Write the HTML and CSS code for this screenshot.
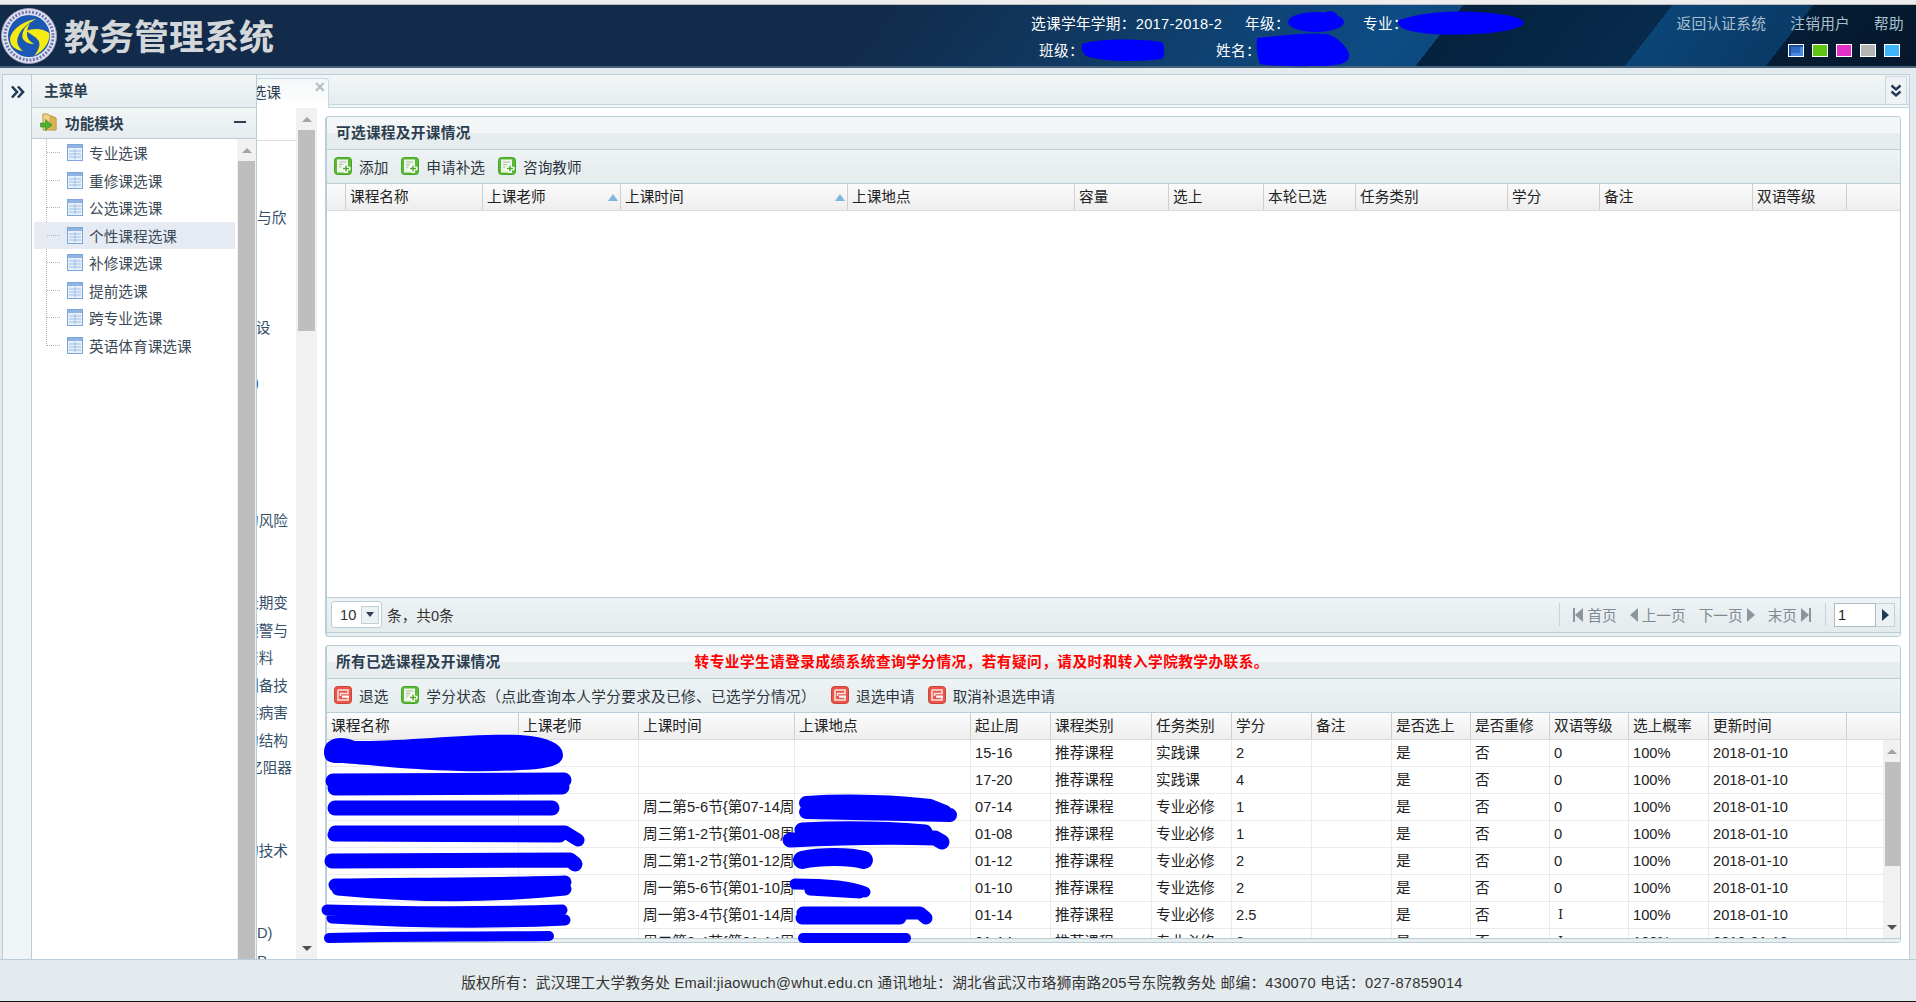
FILE: index.html
```html
<!DOCTYPE html>
<html lang="zh-CN">

<head>
    <meta charset="UTF-8">
    <title>教务管理系统</title>
    <link rel="stylesheet" href="styles.css">
</head>

<body>
    <svg class="defs" xmlns="http://www.w3.org/2000/svg">
        <symbol id="ico-add" viewBox="0 0 18 18">
            <rect x="0.5" y="0.5" width="17" height="17" rx="3" fill="#5cbb35" stroke="#46a326" />
            <rect x="3" y="2.5" width="11" height="13" fill="#eef5e8" />
            <path d="M5 5h7M5 7.5h4M5 10h3" stroke="#a9c0a5" stroke-width="1" />
            <path d="M12 7v9M7.5 11.5h9" stroke="#fff" stroke-width="3.4" />
            <path d="M12 8.5v6M9 11.5h6" stroke="#4aa82a" stroke-width="1.4" />
        </symbol>
        <symbol id="ico-del" viewBox="0 0 18 18">
            <rect x="0.5" y="0.5" width="17" height="17" rx="3" fill="#e8554a" stroke="#cf4236" />
            <path d="M4 4h10v3.5H6.5V10" fill="none" stroke="#fbe3df" stroke-width="1.6" />
            <path d="M4 4v10h10v-3H8" fill="none" stroke="#fbe3df" stroke-width="1.6" />
            <rect x="8" y="9.5" width="7" height="2" fill="#fff" />
        </symbol>
        <symbol id="ico-table" viewBox="0 0 16 17">
            <rect x="0.5" y="0.5" width="15" height="16" fill="#e6effa" stroke="#7aa6dc" />
            <rect x="1" y="1" width="14" height="3" fill="#8fb4e2" />
            <path d="M2 7h12M2 10h12M2 13h12M8 5v10" stroke="#9dbde5" stroke-width="1" />
        </symbol>
    </svg>

    <div class="top-strip"></div>

    <header class="header">
        <svg class="logo" viewBox="0 0 56 56" xmlns="http://www.w3.org/2000/svg">
            <circle cx="28" cy="28" r="27.5" fill="#e4e4ee" stroke="#9c9cc4" />
            <circle cx="28" cy="28" r="24" fill="none" stroke="#6f78b4" stroke-width="3" stroke-dasharray="2 1.5" />
            <circle cx="28" cy="28" r="21" fill="#1a58b4" />
            <path d="M35 11C22 13 10 22 9 31C9 38 14 42 22 43C17 39 15 34 17 29C19 22 27 15 35 11z" fill="#f6ea12" />
            <path d="M29 15C23 19 20 26 22 31C24 34 28 36 33 36C28 33 26 30 26 26C26 22 27 18 29 15z" fill="#f6ea12" />
            <path d="M25 23C32 20 42 20 48 25C50 31 45 42 33 48C38 42 40 36 37 32C34 28 29 26 25 23z" fill="#f6ea12" />
        </svg>
        <div class="brand">教务管理系统</div>
        <div class="info">
            <div class="info-row">
                <span class="info-term">选课学年学期：2017-2018-2</span>
                <span class="info-grade">年级：</span>
                <span>专业：</span>
            </div>
            <div class="info-row info-row--second">
                <span class="info-class">班级：</span>
                <span>姓名：</span>
            </div>
        </div>
        <div class="header-side">
            <nav class="links">
                <a>返回认证系统</a>
                <a>注销用户</a>
                <a>帮助</a>
            </nav>
            <div class="swatches">
                <span class="swatch swatch--blue"></span>
                <span class="swatch swatch--green"></span>
                <span class="swatch swatch--pink"></span>
                <span class="swatch swatch--grey"></span>
                <span class="swatch swatch--sky"></span>
            </div>
        </div>
    </header>

    <main class="main">
        <div class="rail">
            <svg class="rail-icon" viewBox="0 0 15 14" xmlns="http://www.w3.org/2000/svg">
                <path d="M2 1.5L7 7l-5 5.5M8 1.5L13 7l-5 5.5" fill="none" stroke="#1f3a55" stroke-width="2.6" />
            </svg>
        </div>

        <div class="workspace">
            <div class="tabs">
                <div class="tab">个性课程选课<span class="tab-close">×</span></div>
                <button class="tabs-more">
                    <svg viewBox="0 0 12 14" xmlns="http://www.w3.org/2000/svg">
                        <path d="M1.5 1.5L6 5.5l4.5-4M1.5 7.5L6 11.5l4.5-4" fill="none" stroke="#1f3a55" stroke-width="2.4" />
                    </svg>
                </button>
            </div>

            <div class="content">
                <div class="under">
                    <div class="under-head"></div>
                    <ul class="under-list">
                        <li>与欣</li><li></li><li></li><li></li>
                        <li class="cut cut--tight">计设</li><li></li>
                        <li class="cut cut--paren">)</li><li></li><li></li><li></li><li></li>
                        <li class="cut">的风险</li><li></li><li></li>
                        <li class="cut">长期变</li>
                        <li class="cut">预警与</li>
                        <li class="cut">资料</li>
                        <li class="cut">制备技</li>
                        <li class="cut">疾病害</li>
                        <li class="cut">的结构</li>
                        <li class="cut cut--wide">忆阻器</li><li></li><li></li>
                        <li class="cut">的技术</li><li></li><li></li>
                        <li>D)</li>
                        <li>P</li>
                    </ul>
                </div>
                <div class="vbar vbar--under">
                    <span class="vbar-btn vbar-btn--up"></span>
                    <span class="vbar-thumb vbar-thumb--under"></span>
                    <span class="vbar-space"></span>
                    <span class="vbar-btn vbar-btn--down"></span>
                </div>

                <div class="panels">
                    <section class="panel panel--top">
                        <div class="panel-title">可选课程及开课情况</div>
                        <div class="toolbar">
                            <a class="tool"><svg class="tool-icon"><use href="#ico-add" /></svg>添加</a>
                            <a class="tool"><svg class="tool-icon"><use href="#ico-add" /></svg>申请补选</a>
                            <a class="tool"><svg class="tool-icon"><use href="#ico-add" /></svg>咨询教师</a>
                        </div>
                        <div class="grid-head cols-a">
                            <span></span>
                            <span>课程名称</span>
                            <span class="sort">上课老师</span>
                            <span class="sort">上课时间</span>
                            <span>上课地点</span>
                            <span>容量</span>
                            <span>选上</span>
                            <span>本轮已选</span>
                            <span>任务类别</span>
                            <span>学分</span>
                            <span>备注</span>
                            <span>双语等级</span>
                        </div>
                        <div class="grid-empty"></div>
                        <div class="pager">
                            <div class="page-size">10<span class="page-size-btn"></span></div>
                            <span>条，共0条</span>
                            <div class="pager-nav">
                                <span class="pager-sep"></span>
                                <a class="pager-link"><i class="tri tri--first"></i>首页</a>
                                <a class="pager-link"><i class="tri tri--prev"></i>上一页</a>
                                <a class="pager-link">下一页<i class="tri tri--next"></i></a>
                                <a class="pager-link">末页<i class="tri tri--last"></i></a>
                                <span class="pager-sep"></span>
                                <div class="page-jump"><span class="page-input">1</span><span class="page-go"></span></div>
                            </div>
                        </div>
                        <div class="panel-foot"></div>
                    </section>

                    <section class="panel panel--bottom">
                        <div class="panel-title">所有已选课程及开课情况<span class="notice">转专业学生请登录成绩系统查询学分情况，若有疑问，请及时和转入学院教学办联系。</span></div>
                        <div class="toolbar">
                            <a class="tool"><svg class="tool-icon"><use href="#ico-del" /></svg>退选</a>
                            <a class="tool tool--long"><svg class="tool-icon"><use href="#ico-add" /></svg>学分状态（点此查询本人学分要求及已修、已选学分情况）</a>
                            <a class="tool tool--far"><svg class="tool-icon"><use href="#ico-del" /></svg>退选申请</a>
                            <a class="tool"><svg class="tool-icon"><use href="#ico-del" /></svg>取消补退选申请</a>
                        </div>
                        <div class="grid-head cols-b">
                            <span>课程名称</span>
                            <span>上课老师</span>
                            <span>上课时间</span>
                            <span>上课地点</span>
                            <span>起止周</span>
                            <span>课程类别</span>
                            <span>任务类别</span>
                            <span>学分</span>
                            <span>备注</span>
                            <span>是否选上</span>
                            <span>是否重修</span>
                            <span>双语等级</span>
                            <span>选上概率</span>
                            <span>更新时间</span>
                        </div>
                        <div class="grid-scroll">
                            <div class="grid-body">
                                <div class="grid-row cols-b"><span></span><span></span><span></span><span></span><span>15-16</span><span>推荐课程</span><span>实践课</span><span>2</span><span></span><span>是</span><span>否</span><span>0</span><span>100%</span><span>2018-01-10</span></div>
                                <div class="grid-row cols-b"><span></span><span></span><span></span><span></span><span>17-20</span><span>推荐课程</span><span>实践课</span><span>4</span><span></span><span>是</span><span>否</span><span>0</span><span>100%</span><span>2018-01-10</span></div>
                                <div class="grid-row cols-b"><span></span><span></span><span>周二第5-6节{第07-14周}</span><span></span><span>07-14</span><span>推荐课程</span><span>专业必修</span><span>1</span><span></span><span>是</span><span>否</span><span>0</span><span>100%</span><span>2018-01-10</span></div>
                                <div class="grid-row cols-b"><span></span><span></span><span>周三第1-2节{第01-08周}</span><span></span><span>01-08</span><span>推荐课程</span><span>专业必修</span><span>1</span><span></span><span>是</span><span>否</span><span>0</span><span>100%</span><span>2018-01-10</span></div>
                                <div class="grid-row cols-b"><span></span><span></span><span>周二第1-2节{第01-12周}</span><span></span><span>01-12</span><span>推荐课程</span><span>专业必修</span><span>2</span><span></span><span>是</span><span>否</span><span>0</span><span>100%</span><span>2018-01-10</span></div>
                                <div class="grid-row cols-b"><span></span><span></span><span>周一第5-6节{第01-10周}</span><span></span><span>01-10</span><span>推荐课程</span><span>专业选修</span><span>2</span><span></span><span>是</span><span>否</span><span>0</span><span>100%</span><span>2018-01-10</span></div>
                                <div class="grid-row cols-b"><span></span><span></span><span>周一第3-4节{第01-14周}</span><span></span><span>01-14</span><span>推荐课程</span><span>专业必修</span><span>2.5</span><span></span><span>是</span><span>否</span><span class="roman">Ⅰ</span><span>100%</span><span>2018-01-10</span></div>
                                <div class="grid-row cols-b"><span></span><span></span><span>周二第3-4节{第01-14周}</span><span></span><span>01-14</span><span>推荐课程</span><span>专业必修</span><span>2</span><span></span><span>是</span><span>否</span><span class="roman">Ⅰ</span><span>100%</span><span>2018-01-10</span></div>
                            </div>
                            <div class="vbar vbar--grid">
                                <span class="vbar-btn vbar-btn--up"></span>
                                <span class="vbar-thumb vbar-thumb--grid"></span>
                                <span class="vbar-space"></span>
                                <span class="vbar-btn vbar-btn--down"></span>
                            </div>
                        </div>
                        <div class="panel-foot"></div>
                    </section>
                </div>
            </div>

            <!-- the slide-out menu sits on top of the tab and the page under it -->
            <aside class="menu">
                <div class="menu-title">主菜单</div>
                <div class="menu-group">
                    <svg class="group-icon" viewBox="0 0 18 19" xmlns="http://www.w3.org/2000/svg">
                        <path d="M3 17V1h5l2 2h2l4 2v12z" fill="#f1d489" stroke="#bd9640" />
                        <path d="M10 3l6 2v12l-6-1z" fill="#dcb257" stroke="#bd9640" stroke-width="0.6" />
                        <path d="M0.5 10h5V6.5L12 12l-6.5 5.5V14h-5z" fill="#4fb030" stroke="#2f8a1c" stroke-width="0.6" />
                    </svg>
                    <span>功能模块</span>
                    <span class="group-toggle"></span>
                </div>
                <div class="tree-wrap">
                    <ul class="tree">
                        <li class="tree-item"><svg class="tree-icon"><use href="#ico-table" /></svg>专业选课</li>
                        <li class="tree-item"><svg class="tree-icon"><use href="#ico-table" /></svg>重修课选课</li>
                        <li class="tree-item"><svg class="tree-icon"><use href="#ico-table" /></svg>公选课选课</li>
                        <li class="tree-item tree-item--on"><svg class="tree-icon"><use href="#ico-table" /></svg>个性课程选课</li>
                        <li class="tree-item"><svg class="tree-icon"><use href="#ico-table" /></svg>补修课选课</li>
                        <li class="tree-item"><svg class="tree-icon"><use href="#ico-table" /></svg>提前选课</li>
                        <li class="tree-item"><svg class="tree-icon"><use href="#ico-table" /></svg>跨专业选课</li>
                        <li class="tree-item"><svg class="tree-icon"><use href="#ico-table" /></svg>英语体育课选课</li>
                    </ul>
                    <div class="vbar vbar--tree">
                        <span class="vbar-btn vbar-btn--up"></span>
                        <span class="vbar-thumb vbar-thumb--tree"></span>
                    </div>
                </div>
            </aside>
        </div>
    </main>

    <footer class="footer">版权所有：武汉理工大学教务处 Email:jiaowuch@whut.edu.cn 通讯地址：湖北省武汉市珞狮南路205号东院教务处 邮编：430070 电话：027-87859014</footer>

    <!-- blue pen strokes the screenshot's owner drew over private data -->
    <svg class="scribbles" viewBox="0 0 1916 1002" xmlns="http://www.w3.org/2000/svg">
        <g fill="#00f">
            <ellipse cx="1316" cy="22" rx="28" ry="10" />
            <circle cx="1330" cy="20" r="9" />
            <path d="M1399 20c30-10 70-10 100-6 15 2 25 5 25 9s-20 10-50 11c-30 2-60 0-72-6-4-3-5-6-3-8z" />
            <path d="M1082 44c20-6 60-5 80-2 3 5 3 14 0 17-25 3-60 3-76-3-4-4-5-8-4-12z" />
            <path d="M1257 38c20-2 50-6 70-4 10 3 20 12 22 20 1 8-5 11-25 12-20 0-50 1-64-2-3-8-4-18-3-26z" />
            <path d="M324 752C324 738 340 735 355 741C400 742 470 733 520 735C550 737 563 745 563 755C563 765 550 769 520 770C480 773 430 770 400 768C370 765 345 763 335 763C326 762 324 758 324 752Z" />
        </g>
        <g fill="none" stroke="#00f" stroke-linecap="round" stroke-linejoin="round">
            <path d="M333 781L564 780M335 788L562 787" stroke-width="15" />
            <path d="M335 808L552 808" stroke-width="15" />
            <path d="M335 832L565 832L578 840M334 835L560 836" stroke-width="13" />
            <path d="M332 861L570 860L575 864" stroke-width="15" />
            <path d="M335 885C400 884 500 884 565 882M338 889C400 895 480 898 565 889" stroke-width="13" />
            <path d="M327 910C400 912 500 912 562 910M332 918C400 922 480 924 565 920" stroke-width="11" />
            <path d="M329 938C400 936 480 937 549 936" stroke-width="10" />
            <path d="M806 803C850 800 900 802 930 806L945 812M806 812L950 815" stroke-width="14" />
            <path d="M790 840C830 838 880 836 935 838L942 842M802 830C840 828 880 828 925 832" stroke-width="15" />
            <path d="M802 860C820 856 850 856 864 860" stroke-width="18" />
            <path d="M795 884C820 884 850 886 865 892M810 890L860 893" stroke-width="11" />
            <path d="M803 913L920 913L926 918M802 918L900 918" stroke-width="13" />
            <path d="M803 938L906 938" stroke-width="10" />
        </g>
    </svg>
</body>

</html>
```

FILE: styles.css
```css
/*
MAIN LINE: #b9ced6
PAGE BG: #e4ebee
*/

* {
    margin: 0;
    padding: 0;
    box-sizing: border-box;
}

html,
body {
    height: 100%;
    overflow: hidden;
}

body {
    display: flex;
    flex-direction: column;
    position: relative;
    font-family: "Liberation Sans", "Noto Sans CJK SC", sans-serif;
    font-size: 14.67px;
    color: #222;
    background-color: #e4ebee;
}

ul {
    list-style: none;
}

.defs {
    position: absolute;
    width: 0;
    height: 0;
}

.top-strip {
    height: 5px;
    flex: none;
    background-color: #ededed;
    border-bottom: 1px solid #bdbdbd;
}

/* header */
.header {
    height: 63px;
    flex: none;
    display: flex;
    align-items: center;
    color: #fff;
    border-bottom: 2px solid #47647c;
    background: linear-gradient(128deg, #122b4a 0, #122b4a 700px, #0d4c84 1110px, #0c4a80 1153px,
            #05223e 1153px, #082a4c 1318px, #0b4576 1318px, #0a3a66 1429px, #051d35 1429px, #05172b 100%);
}

.logo {
    width: 56px;
    height: 56px;
    margin-left: 1px;
    flex: none;
}

.brand {
    margin-left: 7px;
    padding-top: 4px;
    font-size: 35px;
    font-weight: 700;
    color: #d3d7da;
    line-height: 1;
    white-space: nowrap;
}

.info {
    margin-left: 757px;
    padding-top: 3px;
    width: 644px;
    flex: none;
    display: flex;
    flex-direction: column;
    gap: 9px;
}

.info-row {
    display: flex;
    line-height: 18px;
    letter-spacing: 0.3px;
}

.info-row--second {
    padding-left: 8px;
}

.info-term {
    width: 214px;
}

.info-grade {
    width: 118px;
}

.info-class {
    width: 177px;
}

.header-side {
    flex: 1;
    display: flex;
    flex-direction: column;
    align-items: flex-end;
    gap: 11px;
    padding-right: 12px;
}

.links {
    display: flex;
    gap: 24px;
    color: #a9c0cf;
    line-height: 18px;
    letter-spacing: 0.3px;
}

.swatches {
    display: flex;
    gap: 8px;
    padding-right: 4px;
}

.swatch {
    width: 16px;
    height: 13px;
    border: 1px solid #fff;
}

.swatch--blue {
    background-color: #2d6cc8;
    box-shadow: inset 2px 2px 0 #1c4c96, inset -3px -3px 0 #4b8ae0;
}

.swatch--green {
    background-color: #62c414;
}

.swatch--pink {
    background-color: #e330c8;
}

.swatch--grey {
    background-color: #b4b4b4;
}

.swatch--sky {
    background-color: #3fb4f8;
}

/* main area */
.main {
    flex: 1;
    min-height: 0;
    display: flex;
    padding: 6px 6px 0 2px;
}

.rail {
    width: 30px;
    flex: none;
    display: flex;
    justify-content: center;
    padding-top: 10px;
    background-color: #eff4f6;
    border: 1px solid #b9ced6;
    border-bottom: none;
}

.rail-icon {
    width: 15px;
    height: 14px;
}

.workspace {
    flex: 1;
    min-width: 0;
    position: relative;
    display: flex;
    flex-direction: column;
    background-color: #fff;
    border-right: 1px solid #b9ced6;
}

.tabs {
    height: 34px;
    flex: none;
    display: flex;
    padding: 3px 2px 0 148px;
    background: linear-gradient(#f2f6f7, #e6ecef);
    border-top: 1px solid #b9ced6;
    border-bottom: 4px double #c3d6dc;
}

.tab {
    width: 149px;
    position: relative;
    padding: 0 0 0 12px;
    line-height: 28px;
    background: linear-gradient(#f4f7f8, #ffffff);
    border: 1px solid #c8d9df;
    border-bottom: none;
    border-radius: 3px 3px 0 0;
    margin-bottom: -4px;
    white-space: nowrap;
    color: #2c3e50;
}

.tab-close {
    position: absolute;
    top: 1px;
    right: 3px;
    font-size: 18px;
    font-weight: 700;
    line-height: 14px;
    color: #aebfc7;
}

.tabs-more {
    width: 22px;
    margin-left: auto;
    margin-top: -2px;
    display: flex;
    align-items: center;
    justify-content: center;
    background: #eef2f4;
    border: 1px solid #c8d9df;
    border-bottom: none;
}

.tabs-more svg {
    width: 12px;
    height: 14px;
}

.content {
    flex: 1;
    min-height: 0;
    display: flex;
}

.under {
    width: 264px;
    flex: none;
    overflow: hidden;
    color: #35506b;
}

.under-head {
    height: 33px;
    border-bottom: 1px solid #ddd;
}

.under-list {
    padding-top: 64px;
    padding-left: 225px;
}

.under-list li {
    height: 27.5px;
    line-height: 27px;
    white-space: nowrap;
    overflow: hidden;
}

.cut {
    text-indent: -13px;
}

.cut--wide {
    text-indent: -9px;
}

.cut--tight {
    text-indent: -16px;
}

.cut--paren {
    text-indent: -3px;
}

/* scroll bars */
.vbar {
    flex: none;
    display: flex;
    flex-direction: column;
    background-color: #f1f1f1;
}

.vbar--under {
    width: 21px;
}

.vbar--grid {
    width: 17px;
}

.vbar--tree {
    width: 19px;
}

.vbar-btn {
    height: 22px;
    flex: none;
    display: flex;
    align-items: center;
    justify-content: center;
}

.vbar-btn::after {
    content: "";
    border-left: 5px solid transparent;
    border-right: 5px solid transparent;
}

.vbar-btn--up::after {
    border-bottom: 5px solid #a3a3a3;
}

.vbar-btn--down::after {
    border-top: 5px solid #505050;
}

.vbar-space {
    flex: 1;
}

.vbar-thumb {
    flex: none;
    margin-left: 2px;
    background-color: #bebebe;
}

.vbar-thumb--under {
    height: 201px;
    margin-right: 2px;
}

.vbar-thumb--grid {
    height: 104px;
}

.vbar-thumb--tree {
    flex: 1;
    margin-left: 1px;
    margin-right: 1px;
}

/* grid panels */
.panels {
    flex: 1;
    min-width: 0;
    display: flex;
    flex-direction: column;
    gap: 8px;
    padding: 8px 8px 16px 8px;
}

.panel {
    display: flex;
    flex-direction: column;
    border: 1px solid #b9ced6;
    border-left-width: 2px;
    border-radius: 4px;
    overflow: hidden;
}

.panel--top {
    height: 521px;
    flex: none;
}

.panel--bottom {
    flex: 1;
    min-height: 0;
}

.panel-title {
    height: 33px;
    flex: none;
    display: flex;
    align-items: center;
    padding: 0 0 4px 9px;
    font-weight: 700;
    letter-spacing: 0.3px;
    color: #2c3e50;
    background: linear-gradient(#f2f6f7 50%, #e7edef 50%);
    border-bottom: 1px solid #b9ced6;
}

.notice {
    margin-left: 194px;
    color: #f00;
    letter-spacing: 0.46px;
}

.toolbar {
    height: 34px;
    flex: none;
    display: flex;
    align-items: center;
    gap: 13px;
    padding-left: 7px;
    background: linear-gradient(#eef3f5, #e5ecee);
    border-bottom: 1px solid #b9ced6;
}

.tool {
    display: flex;
    align-items: center;
    gap: 7px;
    padding-bottom: 1px;
    white-space: nowrap;
    color: #2c3640;
}

.tool--long {
    letter-spacing: 0.33px;
}

.tool--far {
    margin-left: 2px;
}

.tool-icon {
    width: 18px;
    height: 18px;
    flex: none;
}

.cols-a {
    grid-template-columns: 19px 137px 138px 227px 227px 94px 95px 92px 152px 92px 153px 94px;
}

.cols-b {
    grid-template-columns: 192px 120px 156px 176px 80px 101px 80px 80px 80px 79px 79px 79px 80px 138px;
}

.grid-head {
    height: 27px;
    flex: none;
    display: grid;
    background: linear-gradient(#fbfbfb, #eeeeee);
    border-bottom: 1px solid #dcdcdc;
    line-height: 26px;
}

.grid-head span {
    padding-left: 4px;
    border-right: 1px solid #cfcfcf;
    white-space: nowrap;
}

.sort {
    position: relative;
}

.sort::after {
    content: "";
    position: absolute;
    right: 2px;
    top: 10px;
    width: 0;
    height: 0;
    border-left: 5px solid transparent;
    border-right: 5px solid transparent;
    border-bottom: 7px solid #7fb6dc;
}

.grid-empty {
    flex: 1;
}

.grid-scroll {
    flex: 1;
    min-height: 0;
    display: flex;
}

.grid-body {
    flex: 1;
    min-width: 0;
    overflow: hidden;
}

.grid-row {
    height: 27px;
    display: grid;
    line-height: 26px;
    border-bottom: 1px solid #ebebeb;
}

.grid-row span {
    padding-left: 4px;
    border-right: 1px solid #ebebeb;
    white-space: nowrap;
    overflow: hidden;
}

.grid-row .roman {
    padding-left: 8px;
    font-family: "DejaVu Serif", serif;
    font-size: 13px;
}

.panel-foot {
    height: 4px;
    flex: none;
    background-color: #e8eef0;
    border-top: 1px solid #b9ced6;
}

.pager {
    height: 35px;
    flex: none;
    display: flex;
    align-items: center;
    padding: 0 5px 1px 4px;
    background: linear-gradient(#eef3f5, #e4ebed);
    border-top: 1px solid #b9ced6;
    color: #333;
}

.page-size {
    width: 51px;
    height: 27px;
    margin-right: 5px;
    display: flex;
    align-items: center;
    justify-content: space-between;
    padding: 0 2px 0 8px;
    background-color: #fff;
    border: 1px solid #b9ced6;
    border-radius: 3px;
}

.page-size-btn {
    width: 18px;
    height: 18px;
    display: flex;
    align-items: center;
    justify-content: center;
    background-color: #edf1f3;
    border: 1px solid #c3d2d8;
}

.page-size-btn::after {
    content: "";
    border-left: 4px solid transparent;
    border-right: 4px solid transparent;
    border-top: 5px solid #2c3e50;
}

.pager-nav {
    margin-left: auto;
    display: flex;
    align-items: center;
    color: #7d8a92;
}

.pager-sep {
    width: 1px;
    height: 23px;
    background-color: #c6d4d9;
}

.pager-link {
    display: flex;
    align-items: center;
    gap: 4px;
    margin-left: 13px;
}

.pager-sep + .pager-link {
    margin-left: 15px;
}

.pager-link + .pager-sep {
    margin-left: 16px;
}

.tri {
    width: 0;
    height: 0;
    border-top: 7px solid transparent;
    border-bottom: 7px solid transparent;
}

.tri--first,
.tri--prev {
    border-right: 8px solid #8b969d;
}

.tri--next,
.tri--last {
    border-left: 8px solid #8b969d;
}

.tri--first {
    box-shadow: -2px 0 0 #8b969d;
}

.tri--last {
    box-shadow: 2px 0 0 #8b969d;
}

.page-jump {
    margin-left: 8px;
    display: flex;
    height: 24px;
}

.page-input {
    width: 42px;
    padding-left: 3px;
    line-height: 22px;
    color: #222;
    background-color: #fff;
    border: 1px solid #a9bcc4;
}

.page-go {
    width: 19px;
    display: flex;
    align-items: center;
    justify-content: center;
    background-color: #edf1f3;
    border: 1px solid #c3d2d8;
    border-left: none;
}

.page-go::after {
    content: "";
    border-top: 6px solid transparent;
    border-bottom: 6px solid transparent;
    border-left: 7px solid #1f3a55;
}

/* menu over the tab */
.menu {
    position: absolute;
    left: 0;
    top: 0;
    bottom: 0;
    width: 225px;
    display: flex;
    flex-direction: column;
    background-color: #fff;
    border-right: 1px solid #b9ced6;
}

.menu-title {
    height: 34px;
    flex: none;
    padding-left: 12px;
    line-height: 33px;
    font-weight: 700;
    color: #2c3e50;
    background: linear-gradient(#f2f6f7, #e6ecef);
    border-top: 1px solid #b9ced6;
    border-bottom: 1px solid #b9ced6;
}

.menu-group {
    height: 31px;
    flex: none;
    display: flex;
    align-items: center;
    padding: 0 10px 2px 8px;
    font-weight: 700;
    color: #2c3e50;
    background: linear-gradient(#f2f6f7, #e6ecef);
    border-bottom: 1px solid #b9ced6;
}

.group-icon {
    width: 18px;
    height: 19px;
    margin-right: 7px;
    flex: none;
}

.group-toggle {
    width: 12px;
    height: 2px;
    margin-left: auto;
    background-color: #2c3e50;
}

.tree-wrap {
    flex: 1;
    min-height: 0;
    display: flex;
}

.tree {
    flex: 1;
    min-width: 0;
    position: relative;
    margin-right: 2px;
    padding-left: 2px;
}

.tree::before {
    content: "";
    position: absolute;
    left: 14px;
    top: 0;
    height: 207px;
    border-left: 1px dotted #b5b5b5;
}

.tree-item {
    height: 27.5px;
    position: relative;
    display: flex;
    align-items: center;
    padding-left: 33px;
    color: #3b4a57;
    white-space: nowrap;
}

.tree-item::before {
    content: "";
    position: absolute;
    left: 13px;
    top: 13px;
    width: 13px;
    border-top: 1px dotted #b5b5b5;
}

.tree-item--on {
    background-color: #e6ebf3;
}

.tree-icon {
    width: 16px;
    height: 17px;
    margin-right: 6px;
    flex: none;
}

.footer {
    height: 43px;
    flex: none;
    text-align: center;
    padding-left: 8px;
    line-height: 47px;
    letter-spacing: 0.27px;
    color: #333;
    background-color: #e4ebee;
    border-top: 1px solid #b9ced6;
    border-bottom: 1px solid #111;
    white-space: nowrap;
    overflow: hidden;
}

.scribbles {
    position: absolute;
    left: 0;
    top: 0;
    width: 1916px;
    height: 1002px;
    pointer-events: none;
}
```
